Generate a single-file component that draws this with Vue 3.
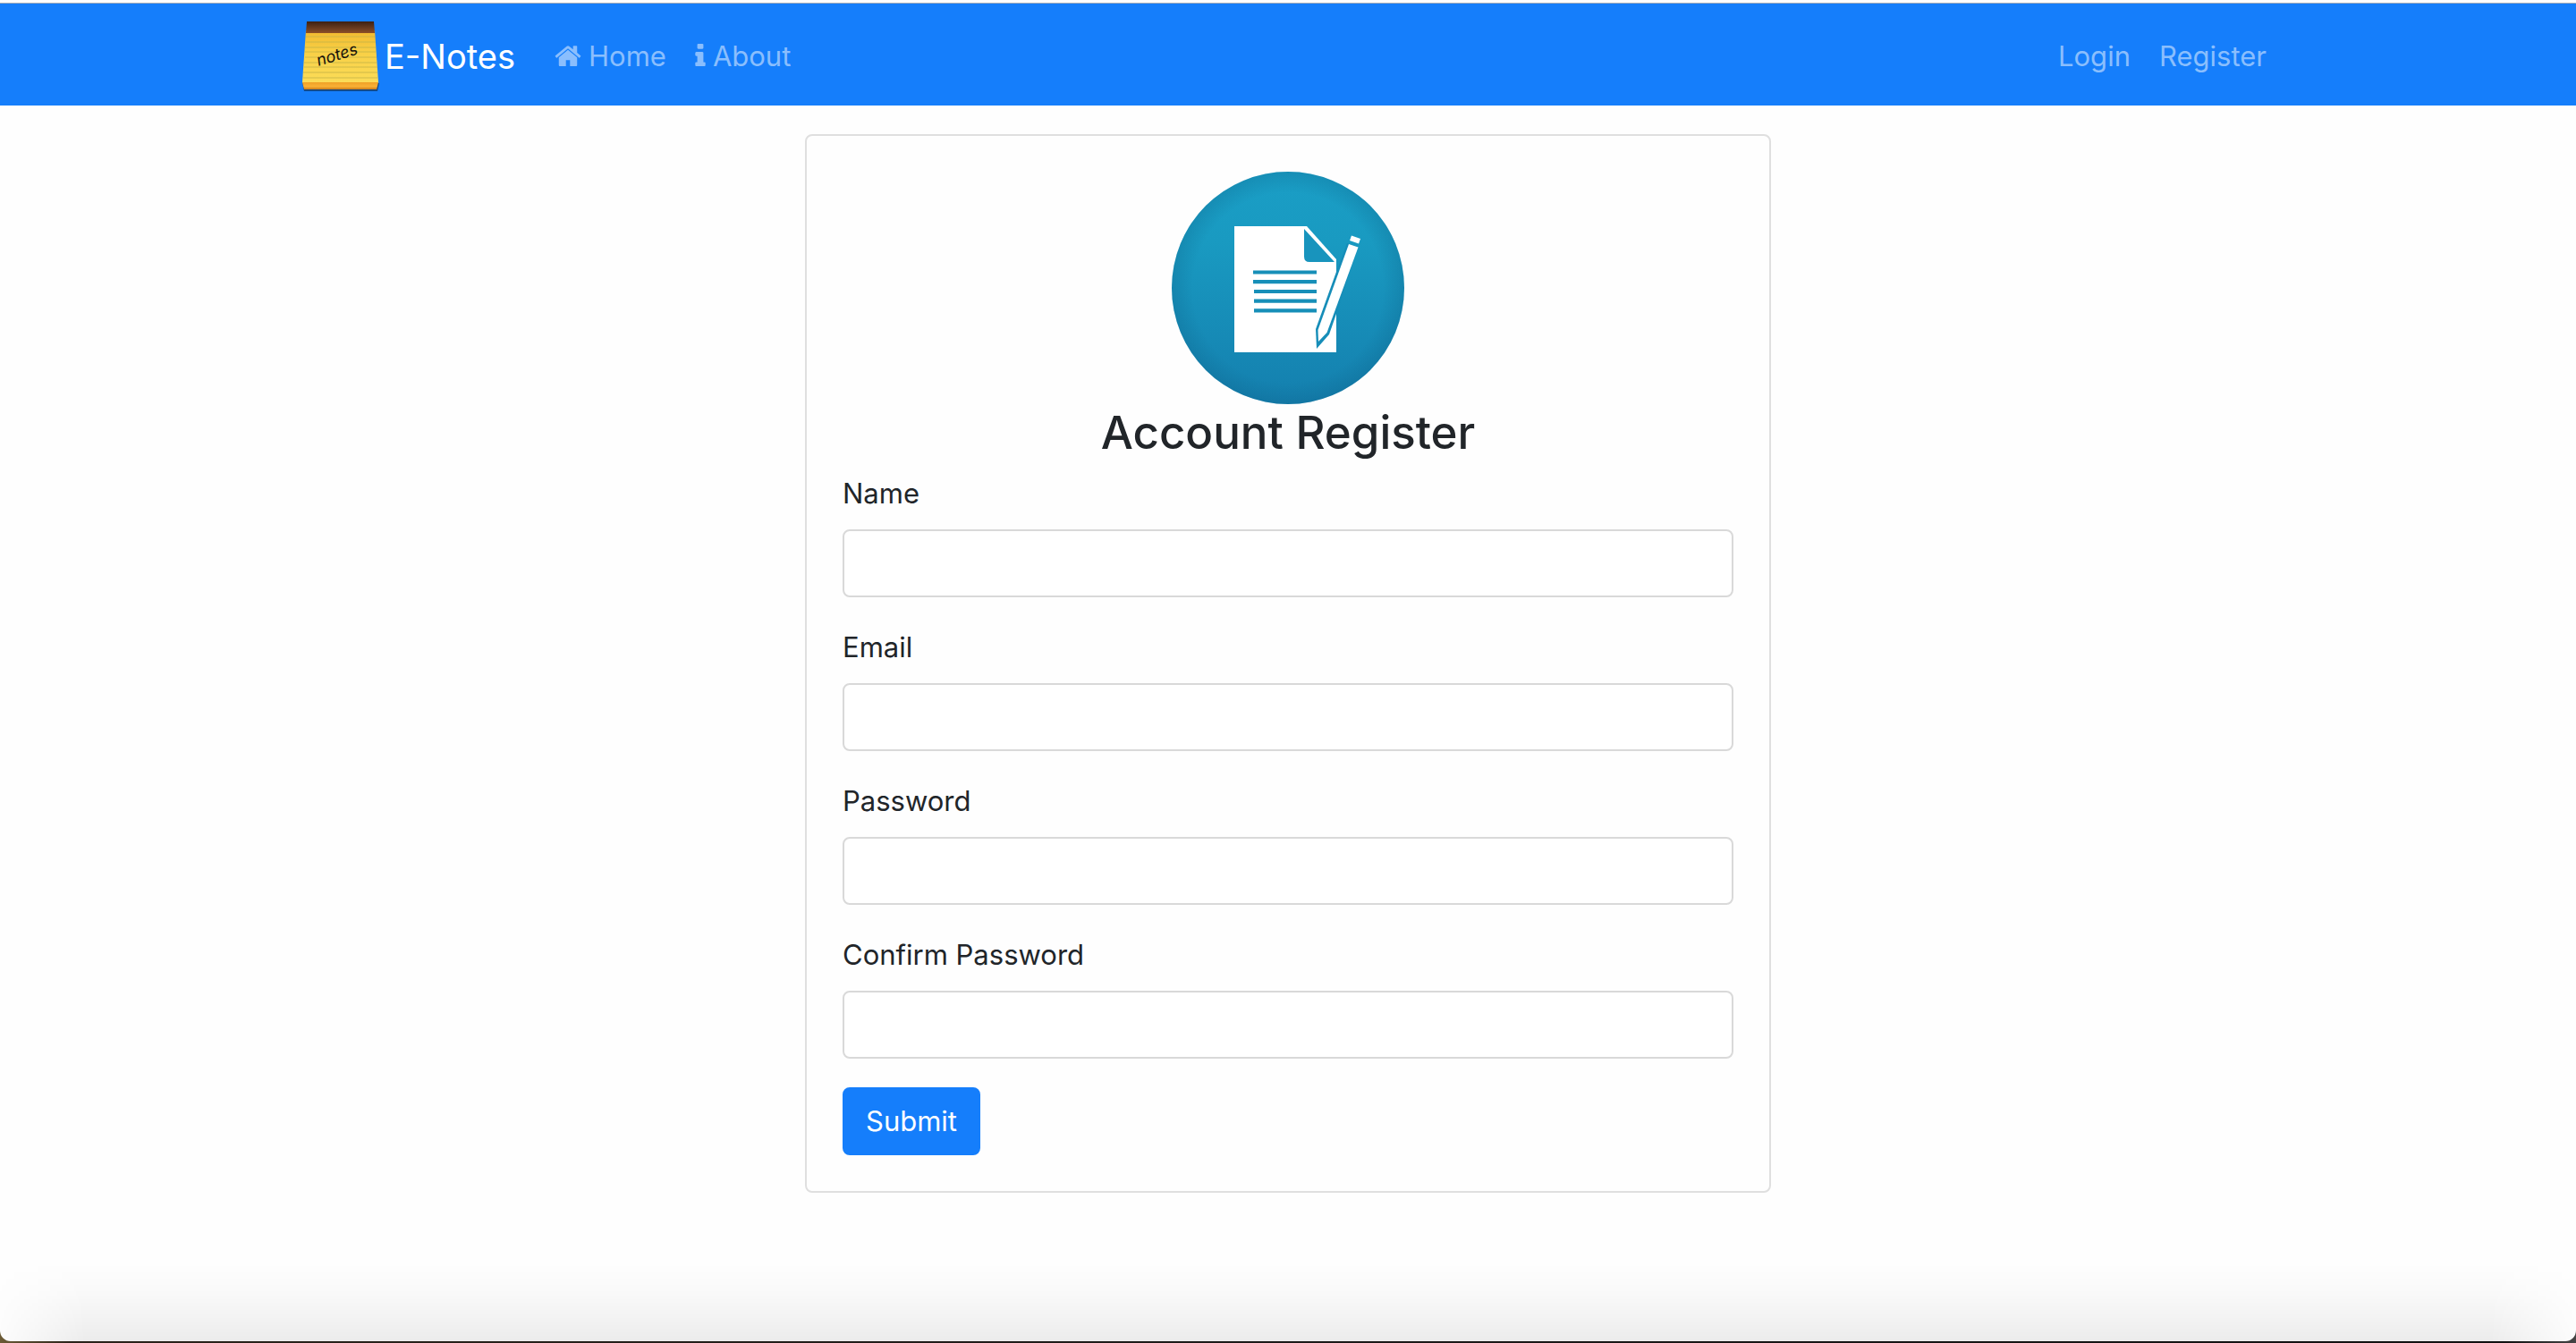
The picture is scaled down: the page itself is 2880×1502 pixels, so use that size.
<script setup>
import { ref } from 'vue'

const fields = ref([
  { id: 'name', label: 'Name', type: 'text', value: '' },
  { id: 'email', label: 'Email', type: 'email', value: '' },
  { id: 'password', label: 'Password', type: 'password', value: '' },
  { id: 'confirm', label: 'Confirm Password', type: 'password', value: '' },
])
</script>

<template>
  <div class="page">
    <header class="navbar">
      <nav class="container bar">
        <a class="brand" href="#">
          <svg class="brand-logo" viewBox="0 1 100 84" aria-hidden="true">
            <defs>
              <linearGradient id="paper" x1="0" y1="0" x2="0" y2="1">
                <stop offset="0" stop-color="#f1b92f" />
                <stop offset="0.4" stop-color="#f8cf45" />
                <stop offset="1" stop-color="#fbdc58" />
              </linearGradient>
              <linearGradient id="binding" x1="0" y1="0" x2="0" y2="1">
                <stop offset="0" stop-color="#3c2113" />
                <stop offset="1" stop-color="#8b4e27" />
              </linearGradient>
              <linearGradient id="edge" x1="0" y1="0" x2="0" y2="1">
                <stop offset="0" stop-color="#f0a026" />
                <stop offset="0.6" stop-color="#f9b136" />
                <stop offset="1" stop-color="#c97a18" />
              </linearGradient>
            </defs>
            <path d="M8 73L10 82H92L94 73Z" fill="#164a86" />
            <path d="M12 14H89L93 72H8Z" fill="url(#paper)" />
            <path d="M8 72H93L91 80H10Z" fill="url(#edge)" />
            <path d="M13 4H88L89 17H12Z" fill="url(#binding)" />
            <path
              d="M12 21H89M12 27H90M11 33H90M11 38H90M11 44H91M10 50H91M10 55H92M9 61H92M9 67H92"
              stroke="#c3b347" stroke-width="0.8" fill="none"
            />
            <text class="logo-word" x="26" y="54" transform="rotate(-17 26 54)">notes</text>
          </svg>
          <span>E-Notes</span>
        </a>
        <ul class="links">
          <li>
            <a href="#">
              <svg class="home-icon" viewBox="64 128 1664 1408" aria-hidden="true">
                <path d="M1472 992v480q0 26-19 45t-45 19h-384v-384h-256v384h-384q-26 0-45-19t-19-45v-480q0-1 .5-3t.5-3l575-474 575 474q1 2 1 6zm223-69l-62 74q-8 9-21 11h-3q-13 0-21-7l-692-577-692 577q-12 8-24 7-13-2-21-11l-62-74q-8-10-7-23.500t11-21.500l719-599q32-26 76-26t76 26l244 204v-195q0-14 9-23t23-9h192q14 0 23 9t9 23v408l219 182q10 8 11 21.500t-7 23.500z" />
              </svg>
              <span>Home</span>
            </a>
          </li>
          <li>
            <a href="#">
              <svg class="info-icon" viewBox="576 128 640 1408" aria-hidden="true">
                <path d="M1216 1344v128q0 26-19 45t-45 19h-512q-26 0-45-19t-19-45v-128q0-26 19-45t45-19h64v-384h-64q-26 0-45-19t-19-45v-128q0-26 19-45t45-19h384q26 0 45 19t19 45v576h64q26 0 45 19t19 45zm-128-1152v192q0 26-19 45t-45 19h-256q-26 0-45-19t-19-45v-192q0-26 19-45t45-19h256q26 0 45 19t19 45z" />
              </svg>
              <span>About</span>
            </a>
          </li>
        </ul>
        <ul class="links account">
          <li><a href="#">Login</a></li>
          <li><a href="#">Register</a></li>
        </ul>
      </nav>
    </header>

    <main class="container content">
      <section class="card">
        <div class="card-head">
          <svg class="badge" viewBox="0 0 260 260" aria-hidden="true">
            <defs>
              <linearGradient id="disc" x1="0" y1="0" x2="0" y2="1">
                <stop offset="0" stop-color="#1a9ec6" />
                <stop offset="0.3" stop-color="#199ac1" />
                <stop offset="1" stop-color="#147fae" />
              </linearGradient>
              <radialGradient id="rim">
                <stop offset="0.82" stop-color="#0b5a80" stop-opacity="0" />
                <stop offset="1" stop-color="#0b5a80" stop-opacity="0.24" />
              </radialGradient>
            </defs>
            <circle cx="130" cy="130" r="130" fill="url(#disc)" />
            <circle cx="130" cy="130" r="130" fill="url(#rim)" />
            <path d="M70 61H151L184 98V202H70Z" fill="#fff" />
            <path d="M148 64L182 101H154Q148 101 148 95Z" fill="#1894bd" />
            <path
              d="M91 112.500H162M91 123.200H162M92 134H162M92 144.600H162M92 155.300H162"
              stroke="#178fb8" stroke-width="4.200" fill="none"
            />
            <path d="M196 80L208 84L184 159L176 182L162 198L161 176L184 112Z" fill="#168db8" />
            <path d="M198 81L208.500 84.500L173.500 180L164 190L163.500 177Z" fill="#fff" />
            <path d="M201 71.500L211 75L209 80.500L199 77Z" fill="#fff" />
          </svg>
          <h1>Account Register</h1>
        </div>
        <form @submit.prevent>
          <div v-for="field in fields" :key="field.id" class="field">
            <label :for="field.id">{{ field.label }}</label>
            <input :id="field.id" v-model="field.value" :type="field.type" />
          </div>
          <button type="submit">Submit</button>
        </form>
      </section>
    </main>
  </div>
</template>

<style>
body {
  background: linear-gradient(90deg, #6b5a35 0, #2b231a 80px, #1c1a19 50%, #111 calc(100% - 80px), #444 100%);
}
</style>

<style scoped>
.page {
  position: relative;
  box-sizing: border-box;
  min-height: calc(100vh - 2px);
  padding-top: 3px;
  overflow: hidden;
  background: #fefefe;
  border-radius: 0 0 12px 12px;
  color: #212529;
  font-family: Inter, "Liberation Sans", sans-serif;
  font-size: 31px;
  line-height: 48px;
}

/* soft shade along the lower edge of the window */
.page::after {
  content: "";
  position: absolute;
  inset: auto 0 0;
  height: 88px;
  background: linear-gradient(to bottom, rgba(0, 0, 0, 0), rgba(0, 0, 0, 0.02) 40%, rgba(0, 0, 0, 0.07));
  mask-image: linear-gradient(90deg, rgba(0, 0, 0, 0.1), #000 96px, #000 calc(100% - 96px), rgba(0, 0, 0, 0.1));
  pointer-events: none;
}

.navbar {
  border-top: 1px solid #a4acb8;
  background: #157efb;
}

.container {
  box-sizing: border-box;
  max-width: 2280px;
  margin: 0 auto;
  padding: 0 30px;
}

.bar {
  display: flex;
  align-items: center;
  min-height: 114px;
  padding-top: 4px;
}

.brand {
  display: flex;
  align-items: center;
  margin-right: 28px;
  color: #fff;
  font-size: 38px;
  text-decoration: none;
}

.brand-logo {
  width: 100px;
  height: 84px;
}

.logo-word {
  font: italic 400 18px Inter, "Liberation Sans", sans-serif;
  fill: #15110a;
}

.links {
  display: flex;
  margin: 0;
  padding: 0;
  list-style: none;
}

.account {
  margin-left: auto;
}

.links a {
  display: flex;
  align-items: baseline;
  gap: 8px;
  padding: 16px;
  color: #8abefd;
  text-decoration: none;
}

.links svg {
  fill: currentColor;
}

.home-icon {
  width: 30px;
  height: 25px;
}

.info-icon {
  width: 12px;
  height: 25px;
}

.content {
  display: flex;
  justify-content: center;
  padding-top: 32px;
  padding-bottom: 32px;
}

.card {
  box-sizing: border-box;
  width: 100%;
  max-width: 1080px;
  padding: 40px;
  border: 2px solid #dfdfdf;
  border-radius: 8px;
}

.card-head {
  text-align: center;
}

.badge {
  display: block;
  width: 260px;
  height: 260px;
  margin: 0 auto;
}

h1 {
  margin: 0 0 12px;
  font-size: 51px;
  font-weight: 500;
  line-height: 64px;
}

.field {
  margin-bottom: 32px;
}

label {
  display: block;
  margin-bottom: 16px;
}

input {
  display: block;
  box-sizing: border-box;
  width: 100%;
  height: 76px;
  padding: 12px 24px;
  border: 2px solid #d9d9d9;
  border-radius: 8px;
  background: #fff;
  color: inherit;
  font: inherit;
}

button {
  display: block;
  padding: 12px 24px;
  border: 2px solid #157efb;
  border-radius: 8px;
  background: #157efb;
  color: #fff;
  font: inherit;
}
</style>
